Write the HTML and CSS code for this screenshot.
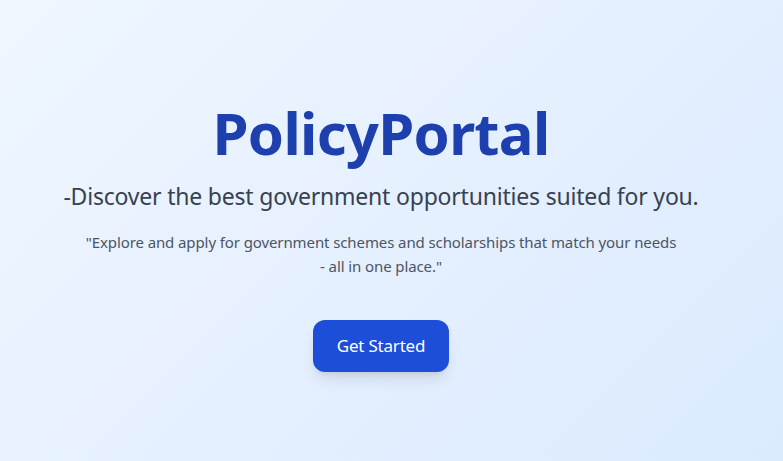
FILE: index.html
```html
<!DOCTYPE html>
<html lang="en">
<head>
    <meta charset="UTF-8">
    <title>PolicyPortal</title>
    <link rel="stylesheet" href="styles.css">
</head>
<body>

<div class="hero">
    <h1 class="title">PolicyPortal</h1>
    <h2 class="tagline">-Discover the best government opportunities suited for you.</h2>
    <p class="intro">"Explore and apply for government schemes and scholarships that match your needs - all in one place."</p>
    <button class="cta">Get Started</button>
</div>

</body>
</html>
```

FILE: styles.css
```css
* {
    box-sizing: border-box;
}
body {
    margin: 0;
    font-family: "Noto Sans", "Open Sans", sans-serif;
    background: linear-gradient(135deg, #eff6ff, #dbeafe);
    min-height: 100vh;
}
.hero {
    min-height: 100vh;
    display: flex;
    flex-direction: column;
    align-items: center;
    justify-content: center;
    text-align: center;
    padding: 14px 37px 0 16px;
}
.title {
    margin: 0;
    font-size: 58px;
    line-height: 1;
    font-weight: 700;
    letter-spacing: -0.7px;
    color: #1e40af;
}
.tagline {
    margin: 18px 0 0;
    font-size: 23px;
    line-height: 32px;
    font-weight: 400;
    letter-spacing: -0.2px;
    color: #374151;
}
.intro {
    margin: 18px 0 0;
    max-width: 596px;
    font-size: 15px;
    line-height: 24px;
    letter-spacing: -0.1px;
    color: #4b5563;
}
.cta {
    margin-top: 42px;
    padding: 12px 24px;
    font-family: inherit;
    font-size: 17px;
    line-height: 28px;
    letter-spacing: -0.2px;
    color: white;
    background-color: #1d4ed8;
    border: none;
    border-radius: 12px;
    box-shadow: 0 10px 15px -3px rgba(0,0,0,0.1), 0 4px 6px -4px rgba(0,0,0,0.1);
    cursor: pointer;
}
.cta:hover {
    background-color: #1e40af;
}
```
